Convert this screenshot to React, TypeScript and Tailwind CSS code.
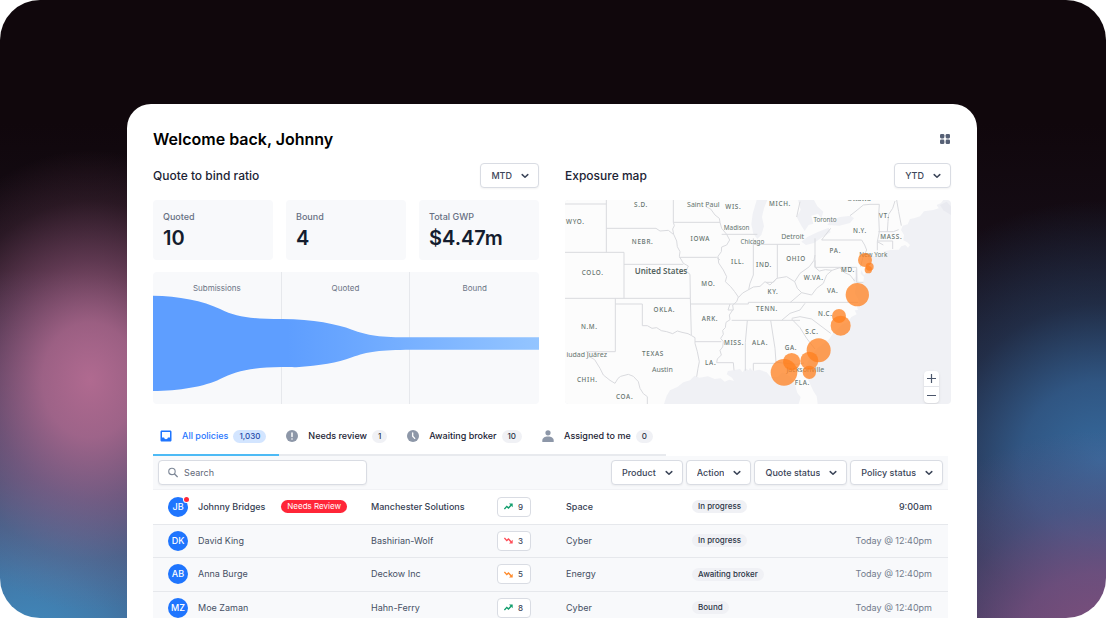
import { useState } from 'react'

interface Policy {
  initials: string
  name: string
  company: string
  score: number
  trend: string
  product: string
  status: string
  time: string
  needsReview?: boolean
}

const stats = [
  { label: 'Quoted', value: '10' },
  { label: 'Bound', value: '4' },
  { label: 'Total GWP', value: '$4.47m' },
]

const policies: Policy[] = [
  { initials: 'JB', name: 'Johnny Bridges', company: 'Manchester Solutions', score: 9, trend: 'good', product: 'Space', status: 'In progress', time: '9:00am', needsReview: true },
  { initials: 'DK', name: 'David King', company: 'Bashirian-Wolf', score: 3, trend: 'bad', product: 'Cyber', status: 'In progress', time: 'Today @ 12:40pm' },
  { initials: 'AB', name: 'Anna Burge', company: 'Deckow Inc', score: 5, trend: 'fair', product: 'Energy', status: 'Awaiting broker', time: 'Today @ 12:40pm' },
  { initials: 'MZ', name: 'Moe Zaman', company: 'Hahn-Ferry', score: 8, trend: 'good', product: 'Cyber', status: 'Bound', time: 'Today @ 12:40pm' },
]

const tabs = [
  { id: 'all', label: 'All policies', count: '1,030' },
  { id: 'review', label: 'Needs review', count: '1' },
  { id: 'awaiting', label: 'Awaiting broker', count: '10' },
  { id: 'assigned', label: 'Assigned to me', count: '0' },
]

const coast =
  'M15 15H1150L1143 24L1130 30L1136 40L1120 45L1092 49L1080 64L1062 70L1050 72L1043 88L1028 92L1023 105L1032 120L1030 136L1042 142L1050 150L1044 158L1036 150L1024 154L1016 164L990 165L968 170L985 173L962 182L928 182L922 190L930 205L922 228L912 240L904 226L902 236L912 246L910 260L901 275L896 262L893 240L892 222L884 226L886 244L880 258L888 276L884 294L893 310L898 324L890 332L894 345L884 346L890 358L874 366L862 382L846 388L836 400L822 410L808 432L790 446L776 456L762 472L748 490L738 514L738 540L750 566L760 588L770 604L773 627H716L722 606L712 594L706 572L698 552L684 540L668 532L652 546L632 546L620 532L598 524L578 528L570 518L566 526L556 520L548 532L540 522L520 526L504 528L500 538L516 548L522 558L508 554L494 560L482 550L464 552L444 544L418 548L404 542L390 556L370 562L352 576L330 586L320 602L312 627H15Z'

const lakes = [
  'M590 15L578 56L574 88L580 116L592 132L604 120L612 94L606 66L612 40L622 15Z',
  'M714 15L722 44L710 66L724 92L734 108L746 90L760 86L754 62L774 56L784 70L790 50L772 34L762 15Z',
  'M724 140L742 126L772 112L806 98L812 112L788 126L762 144L738 150Z',
  'M802 90L812 76L840 66L872 62L882 70L870 84L838 92Z',
]

const borders = [
  'M15 27H139M139 15V172M15 172H192V310M15 310H391M139 100H288L300 108L325 106L340 118M192 208H370',
  'M340 15V82L343 92L338 102L341 118L350 138L352 155L360 170L358 184L370 205L385 213L378 228L390 238L391 310L394 420',
  'M340 82H480M358 187H470L480 195M438 35L452 42L465 60L478 70L480 82L485 100L500 118L509 135L500 150L485 156L484 170L474 184L476 204L490 225L500 245L496 260L512 275L524 290L535 306L530 320L518 330L520 345L504 345L510 327H391',
  'M485 118H592M580 130V240L570 265L566 284L548 294L535 308M566 284L580 276L600 274L615 260L630 270L650 250L680 245L704 260L720 235L748 215L762 196L765 180',
  'M166 310V470H78M166 327H247V392L262 392L276 400L290 398L304 407L320 410L338 416L352 408L366 412L384 416L395 422L405 428V445L412 470L418 500L414 520L410 545M405 440H484',
  'M518 345L508 360L510 374L498 382L496 398L488 406L490 418L482 430L490 440L488 456L480 466L484 480L472 492L470 503H520L522 526M515 376H720M562 376L556 442L556 527M510 327H565V322H895',
  'M86 484L104 494L120 520L130 540L150 556L165 565L174 550L182 544L205 538L220 544L235 560L240 580L250 596L262 605V627',
  'M580 148H720M652 148V248L640 262L618 262M632 376L645 460L648 502L710 508L732 504M580 527V505H648M690 323L725 293L712 280L704 260M735 325L720 345L690 355L665 376M695 370L720 365L755 372L812 415M695 372L720 398L740 430L765 462',
  'M765 130V217H890V262H910M785 135H905L914 150L920 165L908 190L902 215M765 217V196M725 293L755 300L770 280L790 265L800 240L816 226L840 218L852 232L870 240L884 258M765 217L778 228L796 224L816 226',
  'M812 100L790 128L785 135M870 62L888 48L910 30L930 28H958L956 60L958 110L952 140L970 150M1005 18L998 40L986 58L984 80L982 110M955 110H1000L1016 104M954 138H998V162M1010 15L1016 50L1024 92M952 140V166M720 20L710 66',
]

const cities = [
  { x: 430, y: 36, name: 'Saint Paul', size: 21 },
  { x: 530, y: 105, name: 'Madison', size: 19 },
  { x: 577, y: 146, name: 'Chicago', size: 19 },
  { x: 698, y: 132, name: 'Detroit', size: 21 },
  { x: 795, y: 81, name: 'Toronto', size: 19 },
  { x: 897, y: 19, name: 'Ottawa', size: 21 },
  { x: 940, y: 187, name: 'New York', size: 19 },
  { x: 80, y: 487, name: 'iudad Juárez', size: 21 },
  { x: 307, y: 532, name: 'Austin', size: 21 },
  { x: 736, y: 531, name: 'Jacksonville', size: 21 },
]

const states = [
  { x: 243, y: 36, name: 'S.D.' },
  { x: 520, y: 42, name: 'WIS.' },
  { x: 660, y: 34, name: 'MICH.' },
  { x: 46, y: 86, name: 'WYO.' },
  { x: 248, y: 147, name: 'NEBR.' },
  { x: 421, y: 139, name: 'IOWA' },
  { x: 533, y: 207, name: 'ILL.' },
  { x: 98, y: 240, name: 'COLO.' },
  { x: 445, y: 274, name: 'MO.' },
  { x: 313, y: 351, name: 'OKLA.' },
  { x: 88, y: 402, name: 'N.M.' },
  { x: 450, y: 377, name: 'ARK.' },
  { x: 522, y: 449, name: 'MISS.' },
  { x: 279, y: 483, name: 'TEXAS' },
  { x: 452, y: 509, name: 'LA.' },
  { x: 82, y: 561, name: 'CHIH.' },
  { x: 194, y: 611, name: 'COA.' },
  { x: 612, y: 215, name: 'IND.' },
  { x: 708, y: 198, name: 'OHIO' },
  { x: 639, y: 297, name: 'KY.' },
  { x: 621, y: 348, name: 'TENN.' },
  { x: 600, y: 450, name: 'ALA.' },
  { x: 693, y: 466, name: 'GA.' },
  { x: 756, y: 416, name: 'S.C.' },
  { x: 796, y: 363, name: 'N.C.' },
  { x: 818, y: 293, name: 'VA.' },
  { x: 761, y: 256, name: 'W.VA.' },
  { x: 864, y: 231, name: 'MD.' },
  { x: 826, y: 174, name: 'PA.' },
  { x: 900, y: 115, name: 'N.Y.' },
  { x: 973, y: 68, name: 'VT.' },
  { x: 994, y: 131, name: 'MASS.' },
  { x: 727, y: 571, name: 'FLA.' },
]

const exposures = [
  { x: 915, y: 195, r: 21 },
  { x: 929, y: 215, r: 12 },
  { x: 925, y: 224, r: 11 },
  { x: 892, y: 299, r: 35 },
  { x: 837, y: 363, r: 21 },
  { x: 842, y: 392, r: 30 },
  { x: 776, y: 466, r: 36 },
  { x: 748, y: 497, r: 27 },
  { x: 695, y: 500, r: 26 },
  { x: 672, y: 532, r: 40 },
  { x: 748, y: 532, r: 20 },
]

const trendColors: Record<string, string> = {
  good: 'text-[#0f9d6b]',
  fair: 'text-[#ff8a2a]',
  bad: 'text-[#ff4d57]',
}

function Dropdown({ label, options }: { label: string; options: string[] }) {
  return (
    <div className="relative">
      <select
        aria-label={label}
        className="block h-[25px] appearance-none field-sizing-content rounded border border-[#d9dce3] bg-white pl-[10px] pr-[26px] text-[9px] font-medium text-[#3b4558] shadow-xs"
      >
        {options.map((option) => (
          <option key={option}>{option}</option>
        ))}
      </select>
      <svg className="pointer-events-none absolute right-[10px] top-[9px] h-2 w-2" viewBox="0 0 8 8" fill="none" stroke="#3b4558" strokeWidth={1.5} strokeLinecap="round" strokeLinejoin="round">
        <path d="M1.2 2.6L4 5.2L6.8 2.6" />
      </svg>
    </div>
  )
}

function TabIcon({ id }: { id: string }) {
  if (id === 'all') {
    return (
      <svg className="h-3 w-3" viewBox="0 0 12 12">
        <path fill="#1f75fe" fillRule="evenodd" d="M1.8 .5H10.2C10.9 .5 11.5 1.1 11.5 1.8V10.2C11.5 10.9 10.9 11.5 10.2 11.5H1.8C1.1 11.5 .5 10.9 .5 10.2V1.8C.5 1.1 1.1 .5 1.8 .5ZM2 2V7.6H4.1C4.3 8.6 5 9.3 6 9.3S7.7 8.6 7.9 7.6H10V2Z" />
      </svg>
    )
  }
  if (id === 'review') {
    return (
      <svg className="h-3 w-3" viewBox="0 0 12 12">
        <circle cx="6" cy="6" r="6" fill="#8d97a8" />
        <path d="M6 2.9V6.4" stroke="white" strokeWidth={1.5} strokeLinecap="round" />
        <circle cx="6" cy="9" r="0.8" fill="white" />
      </svg>
    )
  }
  if (id === 'awaiting') {
    return (
      <svg className="h-3 w-3" viewBox="0 0 12 12">
        <circle cx="6" cy="6" r="6" fill="#8d97a8" />
        <path d="M5.7 2.8V6.2L7.7 8.4" fill="none" stroke="white" strokeWidth={1.3} strokeLinecap="round" />
      </svg>
    )
  }
  return (
    <svg className="h-3 w-3" viewBox="0 0 12 12" fill="#8d97a8">
      <circle cx="6" cy="2.8" r="2.6" />
      <path d="M.3 12V10.5C.3 8 2.8 6.5 6 6.5S11.7 8 11.7 10.5V12Z" />
    </svg>
  )
}

function TrendIcon({ trend }: { trend: string }) {
  return (
    <svg className={`h-[7px] w-[9px] ${trendColors[trend]}`} viewBox="0 0 9 7" fill="none" stroke="currentColor" strokeWidth={1.4}>
      {trend === 'good' ? (
        <>
          <path d="M.4 6.1L2.8 3.4L4.5 5L7 2.2" />
          <path d="M5 .5H8.7V4.2Z" fill="currentColor" stroke="none" />
        </>
      ) : (
        <>
          <path d="M.4 .9L2.8 3.6L4.5 2L7 4.8" />
          <path d="M5 6.5H8.7V2.8Z" fill="currentColor" stroke="none" />
        </>
      )}
    </svg>
  )
}

function Funnel() {
  return (
    <div className="relative mt-3 h-[132px] overflow-hidden rounded bg-[#f8f9fb]">
      <div className="grid h-full grid-cols-3 divide-x divide-[#e6e8ec] text-center text-[8px] leading-[32px] text-[#6b7485]">
        <div>Submissions</div>
        <div>Quoted</div>
        <div>Bound</div>
      </div>
      <svg className="absolute inset-0 h-full w-full" viewBox="39 24 1156 396" preserveAspectRatio="none">
        <defs>
          <linearGradient id="funnel">
            <stop offset="0.35" stopColor="#5e9eff" />
            <stop offset="0.5" stopColor="#69a6ff" />
            <stop offset="1" stopColor="#94c5ff" />
          </linearGradient>
        </defs>
        <path
          fill="url(#funnel)"
          d="M39 95C115 96 190 110 240 135S330 164 425 165C520 166 590 180 635 197S720 220 812 220H1195V257H812C720 258 680 262 635 280S540 304 468 310C450 308 440 309 425 309C330 310 285 322 240 345S115 381 39 381Z"
        />
      </svg>
    </div>
  )
}

function ExposureMap() {
  return (
    <div className="relative mt-3 h-[204px] overflow-hidden rounded bg-[#f0f1f5]">
      <svg className="h-full w-full" viewBox="15 15 1158 612" preserveAspectRatio="xMidYMid slice">
        <path d={coast} fill="#fcfcfc" />
        <path d="M1140 30L1160 20L1173 34V60L1150 46Z" fill="#e9eaf0" />
        {lakes.map((d) => (
          <path key={d} d={d} fill="#f0f1f5" />
        ))}
        {borders.map((d) => (
          <path key={d} d={d} fill="none" stroke="#d9dade" strokeWidth={3} strokeLinejoin="round" />
        ))}
        <g className="font-['Noto_Sans',sans-serif]" textAnchor="middle" fill="#66746f">
          <g fontSize={19} fontWeight={500} letterSpacing={2}>
            {states.map((s) => (
              <text key={s.name} x={s.x} y={s.y}>{s.name}</text>
            ))}
          </g>
          {cities.map((c) => (
            <text key={c.name} x={c.x} y={c.y} fontSize={c.size}>{c.name}</text>
          ))}
          <text x={303} y={238} fontSize={24} fontWeight={600} fill="#54635e">United States</text>
        </g>
        <g fill="#ff7f1e" fillOpacity={0.75}>
          {exposures.map((e) => (
            <circle key={`${e.x}-${e.y}`} cx={e.x} cy={e.y} r={e.r} />
          ))}
        </g>
      </svg>
      <div className="absolute bottom-px right-3 flex w-[15px] flex-col divide-y divide-[#e3e5ea] rounded-sm bg-white shadow-sm">
        <button aria-label="Zoom in" className="flex h-4 items-center justify-center">
          <svg className="h-[9px] w-[9px]" viewBox="0 0 9 9" stroke="#4b566b" strokeWidth={1.2}>
            <path d="M0 4.5H9M4.5 0V9" />
          </svg>
        </button>
        <button aria-label="Zoom out" className="flex h-4 items-center justify-center">
          <svg className="h-[9px] w-[9px]" viewBox="0 0 9 9" stroke="#4b566b" strokeWidth={1.2}>
            <path d="M0 4.5H9" />
          </svg>
        </button>
      </div>
    </div>
  )
}

function PolicyRow({ policy }: { policy: Policy }) {
  return (
    <tr className={`h-[34px] border-b border-[#e6e8ec] even:h-[33px] ${policy.needsReview ? 'bg-white font-medium text-[#364053]' : 'bg-[#f8f9fb] text-[#465064]'}`}>
      <td className="pl-[15px]">
        <div className="flex items-center">
          <div className="relative mr-[10px] flex h-5 w-5 items-center justify-center rounded-full bg-[#1f75fe] text-[9px] font-medium text-white">
            {policy.initials}
            {policy.needsReview && <span className="absolute -right-px top-0 h-[5px] w-[5px] rounded-full bg-[#ff2638] ring-1 ring-white" />}
          </div>
          {policy.name}
          {policy.needsReview && (
            <span className="ml-4 rounded-full bg-[#ff2638] px-[6px] text-[8px] font-normal leading-[13px] text-white">Needs Review</span>
          )}
        </div>
      </td>
      <td>{policy.company}</td>
      <td>
        <div className="flex h-5 w-[34px] items-center justify-between rounded-sm border border-[#d9dce3] bg-white pl-[6px] pr-[7px] text-[8px] font-medium text-[#3b4558]">
          <TrendIcon trend={policy.trend} />
          {policy.score}
        </div>
      </td>
      <td>{policy.product}</td>
      <td>
        <div className="w-fit rounded-full bg-[#f0f1f5] px-[6px] text-[8px] font-medium leading-[13px] text-[#2b3446]">{policy.status}</div>
      </td>
      <td className={`pr-4 text-right ${policy.needsReview ? '' : 'text-[#727b8b]'}`}>{policy.time}</td>
    </tr>
  )
}

export default function App() {
  const [activeTab, setActiveTab] = useState('all')
  const [search, setSearch] = useState('')

  const visiblePolicies = policies.filter((p) =>
    `${p.name} ${p.company}`.toLowerCase().includes(search.toLowerCase())
  )

  return (
    <div className="h-screen bg-white font-['Inter',sans-serif]">
      <div className="h-full overflow-hidden rounded-[40px] bg-[#10070c] bg-[radial-gradient(ellipse_190px_230px_at_90px_380px,#b06a90_0%,#b06a90d9_25%,#a5628880_52%,#9055702e_78%,transparent_100%),radial-gradient(ellipse_420px_380px_at_30px_650px,#3f8cc0_0%,#4482b4e6_20%,#4a6a9ab3_45%,#4a5a8a59_75%,transparent_100%),radial-gradient(ellipse_240px_220px_at_1100px_650px,#80507d_0%,#7a5080cc_35%,#6a507f66_65%,transparent_100%),radial-gradient(ellipse_260px_260px_at_1100px_460px,#35699c_0%,#35669acc_30%,#2f588566_60%,transparent_100%),linear-gradient(#10070c_20%,#1a1220_60%,#2b2540_100%)] pl-[127px] pr-[129px] pt-[104px]">
        <main className="rounded-t-[24px] bg-white px-[26px] pb-6 pt-6">
          {/* Header */}
          <div className="flex h-[22px] items-center justify-between">
            <h1 className="text-[16px] font-semibold text-black">Welcome back, Johnny</h1>
            <button aria-label="Apps" className="mr-px">
              <svg className="h-[10px] w-[10px]" viewBox="0 0 10 10" fill="#566075">
                <rect width="4.4" height="4.4" rx="1.3" />
                <rect x="5.6" width="4.4" height="4.4" rx="1.3" />
                <rect y="5.6" width="4.4" height="4.4" rx="1.3" />
                <rect x="5.6" y="5.6" width="4.4" height="4.4" rx="1.3" />
              </svg>
            </button>
          </div>

          {/* Overview */}
          <div className="mt-[13px] grid grid-cols-2 gap-[26px]">
            <section>
              <div className="flex items-center justify-between">
                <h2 className="text-[12px] font-medium text-[#1b2334]">Quote to bind ratio</h2>
                <Dropdown label="Ratio period" options={['MTD', 'YTD']} />
              </div>
              <div className="mt-3 grid grid-cols-3 gap-[13px]">
                {stats.map((stat) => (
                  <div key={stat.label} className="h-[60px] rounded bg-[#f8f9fb] px-[10px] pt-[10px]">
                    <div className="text-[9px] font-medium leading-[14px] text-[#677083]">{stat.label}</div>
                    <div className="text-[20px] font-semibold leading-[28px] text-[#151d2e]">{stat.value}</div>
                  </div>
                ))}
              </div>
              <Funnel />
            </section>
            <section>
              <div className="flex items-center justify-between">
                <h2 className="text-[12px] font-medium text-[#1b2334]">Exposure map</h2>
                <Dropdown label="Map period" options={['YTD', 'MTD']} />
              </div>
              <ExposureMap />
            </section>
          </div>

          {/* Policies */}
          <section className="mr-[3px] mt-[14px]">
            <div className="flex w-fit border-b-2 border-[#e8eaee]">
              {tabs.map((tab) => (
                <button
                  key={tab.id}
                  onClick={() => setActiveTab(tab.id)}
                  className={`-mb-[2px] flex h-[38px] items-center border-b-2 pl-[7px] pr-[13px] text-[9px] font-medium ${activeTab === tab.id ? 'border-[#4dbaf5] text-[#1f75fe]' : 'border-transparent text-[#1b2334]'}`}
                >
                  <TabIcon id={tab.id} />
                  <span className="ml-[10px]">{tab.label}</span>
                  <span className={`ml-[5px] rounded-full px-[6px] text-[8px] leading-[13px] ${activeTab === tab.id ? 'bg-[#d3e5ff] text-[#2449a8]' : 'bg-[#f0f1f5] text-[#2b3446]'}`}>
                    {tab.count}
                  </span>
                </button>
              ))}
            </div>

            <div className="flex h-[34px] items-center justify-between border-b border-[#f1f2f5] bg-[#f8f9fb] px-[5px]">
              <label className="flex h-[25px] w-[209px] items-center gap-[6px] rounded border border-[#d9dce3] bg-white pl-[9px] shadow-xs">
                <svg className="h-[11px] w-[11px]" viewBox="0 0 11 11" fill="none" stroke="#7d8797" strokeWidth={1.2}>
                  <circle cx="4.3" cy="4.3" r="3.5" />
                  <path d="M6.9 6.9L10.5 10.5" strokeWidth={1.5} />
                </svg>
                <input
                  aria-label="Search"
                  placeholder="Search"
                  value={search}
                  onChange={(e) => setSearch(e.target.value)}
                  className="w-full bg-transparent text-[9px] text-[#3b4558] outline-none placeholder:text-[#5f6878]"
                />
              </label>
              <div className="flex gap-[3px]">
                <Dropdown label="Product" options={['Product', 'Cyber', 'Energy', 'Space']} />
                <Dropdown label="Action" options={['Action']} />
                <Dropdown label="Quote status" options={['Quote status']} />
                <Dropdown label="Policy status" options={['Policy status']} />
              </div>
            </div>

            <table className="w-full table-fixed text-left text-[9px]">
              <colgroup>
                <col className="w-[218px]" />
                <col className="w-[126px]" />
                <col className="w-[69px]" />
                <col className="w-[126px]" />
                <col className="w-[126px]" />
                <col />
              </colgroup>
              <tbody>
                {visiblePolicies.map((policy) => (
                  <PolicyRow key={policy.name} policy={policy} />
                ))}
              </tbody>
            </table>
          </section>
        </main>
      </div>
    </div>
  )
}
